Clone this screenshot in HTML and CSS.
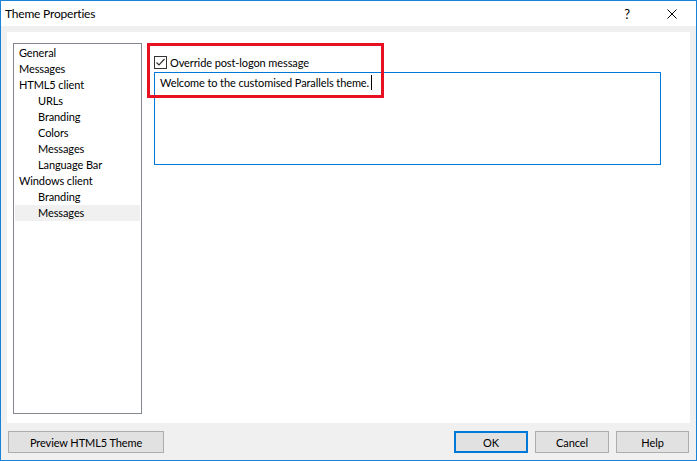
FILE: index.html
```html
<!DOCTYPE html>
<html lang="en">
<head>
    <meta charset="UTF-8">
    <meta name="viewport" content="width=device-width, initial-scale=1.0">
    <title>Theme Properties</title>
    <link rel="stylesheet" href="styles.css">
</head>
<body>

    <div class="dialog">

        <!-- Title bar -->
        <div class="title-bar">
            <span class="title">Theme Properties</span>
            <span class="title-help">?</span>
            <span class="title-close">
                <svg width="10" height="10" viewBox="0 0 10 10">
                    <path d="M0.5 0.5 L9.5 9.5 M9.5 0.5 L0.5 9.5" stroke="#000" stroke-width="1" fill="none"/>
                </svg>
            </span>
        </div>

        <!-- White panel with tree and settings -->
        <div class="panel">
            <div class="tree">
                <div class="tree-item">General</div>
                <div class="tree-item">Messages</div>
                <div class="tree-item">HTML5 client</div>
                <div class="tree-item child">URLs</div>
                <div class="tree-item child">Branding</div>
                <div class="tree-item child">Colors</div>
                <div class="tree-item child">Messages</div>
                <div class="tree-item child">Language Bar</div>
                <div class="tree-item">Windows client</div>
                <div class="tree-item child">Branding</div>
                <div class="tree-item child selected">Messages</div>
            </div>

            <div class="settings">
                <label class="check-row">
                    <span class="checkbox">
                        <svg width="11" height="11" viewBox="0 0 11 11">
                            <path d="M1.5 5.5 L4 8 L9.5 2" stroke="#333" stroke-width="1.2" fill="none"/>
                        </svg>
                    </span>
                    Override post-logon message
                </label>
                <div class="message-box">Welcome to the customised Parallels theme.<span class="caret"></span></div>

                <!-- red highlight drawn over the option -->
                <div class="highlight"></div>
            </div>
        </div>

        <!-- Bottom buttons -->
        <div class="button-bar">
            <button class="btn preview">Preview HTML5 Theme</button>
            <div class="spacer"></div>
            <button class="btn default">OK</button>
            <button class="btn">Cancel</button>
            <button class="btn help">Help</button>
        </div>

    </div>

</body>
</html>
```

FILE: styles.css
```css
/* whole page is the dialog window */
body {
    margin: 0;
    font-family: Lato, 'Liberation Sans', sans-serif;
    font-size: 11px;
    letter-spacing: -0.1px;
    color: #000;
}

.dialog {
    width: 697px;
    height: 461px;
    box-sizing: border-box;
    border: 1px solid #1883d7;
    background-color: #f0f0f0;
    display: flex;
    flex-direction: column;
}

/* title bar */
.title-bar {
    height: 25px;
    background-color: #fff;
    display: flex;
    align-items: center;
    padding-left: 4px;
    font-size: 12px;
    letter-spacing: -0.2px;
}

.title {
    flex: 1;
}

.title-help {
    width: 44px;
    text-align: center;
    font-size: 13px;
}

.title-close {
    width: 46px;
    height: 25px;
    display: flex;
    align-items: center;
    justify-content: center;
    margin-right: 1px;
}

/* white panel */
.panel {
    margin: 6px 6px 0 6px;
    height: 391px;
    background-color: #fff;
    display: flex;
    padding: 11px 6px 0 6px;
    box-sizing: border-box;
}

.tree {
    width: 129px;
    height: 371px;
    box-sizing: border-box;
    border: 1px solid #828790;
    padding: 1px 1px 0 1px;
}

.tree-item {
    height: 16px;
    line-height: 16px;
    padding-left: 4px;
    color: #000;
}

.tree-item.child {
    padding-left: 23px;
}

.tree-item.selected {
    background-color: #f0f0f0;
}

/* right side settings */
.settings {
    position: relative;
    margin-left: 12px;
    padding-top: 11px;
}

.check-row {
    display: flex;
    align-items: center;
    height: 16px;
}

.checkbox {
    width: 13px;
    height: 13px;
    box-sizing: border-box;
    border: 1px solid #333;
    display: flex;
    align-items: center;
    justify-content: center;
    margin-right: 3px;
}

.message-box {
    margin-top: 2px;
    width: 507px;
    height: 93px;
    box-sizing: border-box;
    border: 1px solid #0078d7;
    padding: 2px 5px;
    line-height: 16px;
}

.caret {
    display: inline-block;
    width: 1px;
    height: 15px;
    background-color: #000;
    vertical-align: -3px;
    margin-left: 2px;
}

.highlight {
    position: absolute;
    left: -7px;
    top: 0;
    width: 237px;
    height: 55px;
    box-sizing: border-box;
    border: 3px solid #e81123;
}

/* buttons along the bottom */
.button-bar {
    display: flex;
    padding: 8px 7px 0 7px;
    gap: 7px;
}

.spacer {
    flex: 1;
}

.btn {
    height: 22px;
    width: 74px;
    box-sizing: border-box;
    border: 1px solid #adadad;
    background-color: #e1e1e1;
    font-family: Lato, 'Liberation Sans', sans-serif;
    font-size: 11px;
    letter-spacing: -0.1px;
    color: #000;
    padding: 0;
}

.btn.preview {
    width: 156px;
}

.btn.help {
    width: 73px;
}

.btn.default {
    border: 2px solid #0078d7;
}
```
